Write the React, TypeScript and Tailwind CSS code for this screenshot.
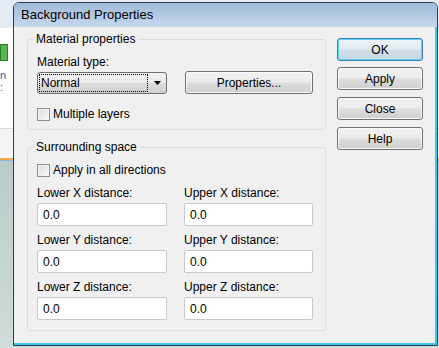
import React from 'react';

// Win7 style push button
const btnBase =
  "flex items-center justify-center rounded-[3px] border text-[12px] leading-[14px] text-black";
const btnGray =
  "border-[#707070] bg-[linear-gradient(#f2f2f2_0%,#ebebeb_48%,#dddddd_52%,#cfcfcf_100%)] shadow-[inset_0_0_0_1px_#fbfbfb]";

const Button: React.FC<{label: string; isDefault?: boolean; className?: string}> = ({label, isDefault, className}) => (
  <div
    className={`${btnBase} ${
      isDefault
        ? "border-[#3c7fb1] bg-[linear-gradient(#edf3f7_0%,#e1ebf1_48%,#d2e0e9_52%,#c6d7e2_100%)] shadow-[inset_0_0_0_1px_#5ed3f4]"
        : btnGray
    } ${className ?? ""}`}
  >
    {label}
  </div>
);

const CheckBox: React.FC<{label: string}> = ({label}) => (
  <div className="flex items-center h-[14px]">
    <span className="w-[13px] h-[13px] border border-[#8e8f8f] bg-[linear-gradient(135deg,#dcdcdc,#fbfbfb)] shadow-[inset_0_0_0_1px_#f4f4f4]" />
    <span className="ml-[3px] leading-[14px]">{label}</span>
  </div>
);

const Field: React.FC<{label: string; value: string}> = ({label, value}) => (
  <div className="flex flex-col">
    <div className="leading-[14px]">{label}</div>
    <div className="mt-[3px] h-[23px] rounded-[2px] border border-[#c5c9cf] bg-white pl-[5px] flex items-center">
      {value}
    </div>
  </div>
);

const legendCls = "ml-[-4px] px-[3px] leading-[14px]";
const fieldsetCls = "w-[299px] rounded-[3px] border border-[#d5dfe5] pl-[9px] pr-[9px]";

export default function App() {
  return (
    <div className="relative w-[439px] h-[348px] overflow-hidden font-['Liberation_Sans',Arial,sans-serif] text-[12px] text-black">
      {/* what lies behind the dialog */}
      <div className="flex flex-col w-full h-full">
        <div className="h-[28px] bg-[#e4ebf4]" />
        <div className="h-[100px] bg-white flex flex-col">
          <div className="mt-[16px] w-[8px] h-[17px] bg-[#56b84a] border border-[#2f7d2a]" />
          <div className="mt-[8px] text-[#1a5fb4] text-[11px] leading-[12px]">n</div>
          <div className="text-[#1a5fb4] text-[11px] leading-[12px]">:</div>
        </div>
        <div className="h-[30px] bg-[#f5f5f5] border-t border-[#d8d8d8]" />
        <div className="h-[2px] bg-[#f0a84c]" />
        <div className="h-[1px] bg-[#8fb7e0]" />
        <div className="flex-1 bg-[linear-gradient(#b9ccc9,#cfdcd9)]" />
      </div>

      {/* dialog window */}
      <div className="absolute left-[13px] top-[2px] w-[425px] h-[344px] flex flex-col rounded-t-[6px] border border-[#2c3e52] bg-[#f0f0f0] overflow-hidden">
        <div className="h-[24px] shrink-0 flex items-center pl-[7px] text-[13px] bg-[linear-gradient(#a0bad8,#b5cbe4_55%,#c5d8ed)]">
          Background Properties
        </div>
        <div className="flex-1 flex border-r-2 border-b-2 border-[#3fc6ee] pl-[13px]">
          <div className="flex flex-col">
            <fieldset className={`${fieldsetCls} mt-[5px] pt-[9px] pb-[8px]`}>
              <legend className={legendCls}>Material properties</legend>
              <div className="leading-[14px]">Material type:</div>
              <div className="mt-[2px] flex items-end">
                <div className="w-[130px] h-[22px] flex rounded-[3px] border border-[#707070] bg-[linear-gradient(#f2f2f2_0%,#ebebeb_48%,#dddddd_52%,#cfcfcf_100%)]">
                  <div className="flex-1 m-[1px] border border-dotted border-black flex items-center pl-[1px]">
                    Normal
                  </div>
                  <div className="w-[17px] flex items-center justify-center">
                    <svg width="7" height="4" viewBox="0 0 7 4">
                      <path d="M0 0H7L3.5 4Z" fill="#000" />
                    </svg>
                  </div>
                </div>
                <Button label="Properties..." className="ml-[18px] w-[128px] h-[23px]" />
              </div>
              <div className="mt-[13px]">
                <CheckBox label="Multiple layers" />
              </div>
            </fieldset>

            <fieldset className={`${fieldsetCls} mt-[10px] pt-[9px] pb-[10px]`}>
              <legend className={legendCls}>Surrounding space</legend>
              <CheckBox label="Apply in all directions" />
              <div className="mt-[9px] grid grid-cols-[130px_129px] gap-x-[17px] gap-y-[7px]">
                <Field label="Lower X distance:" value="0.0" />
                <Field label="Upper X distance:" value="0.0" />
                <Field label="Lower Y distance:" value="0.0" />
                <Field label="Upper Y distance:" value="0.0" />
                <Field label="Lower Z distance:" value="0.0" />
                <Field label="Upper Z distance:" value="0.0" />
              </div>
            </fieldset>
          </div>

          <div className="ml-[11px] mt-[11px] flex flex-col">
            <Button label="OK" isDefault className="w-[86px] h-[23px]" />
            <Button label="Apply" className="mt-[6px] w-[86px] h-[23px]" />
            <Button label="Close" className="mt-[7px] w-[86px] h-[23px]" />
            <Button label="Help" className="mt-[7px] w-[86px] h-[23px]" />
          </div>
        </div>
      </div>
    </div>
  );
}
